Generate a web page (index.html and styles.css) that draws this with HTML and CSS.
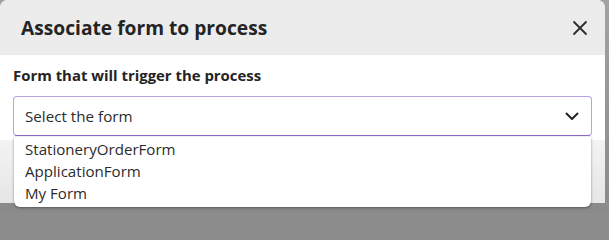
FILE: index.html
```html
<!DOCTYPE html>
<html lang="en">
<head>
<meta charset="utf-8">
<title>Associate form to process</title>
<link rel="stylesheet" href="styles.css">
</head>
<body>
<div class="page">
  <div class="dialog">
    <div class="header">
      <h1 class="title">Associate form to process</h1>
      <button class="close" aria-label="Close">
        <svg width="16" height="16" viewBox="0 0 16 16"><path d="M2 2 L14 14 M14 2 L2 14" stroke="#2b2b2b" stroke-width="1.8" fill="none" stroke-linecap="round"/></svg>
      </button>
    </div>
    <div class="body">
      <label class="label">Form that will trigger the process</label>
      <div class="select-wrap">
        <div class="select">
          <span class="placeholder">Select the form</span>
          <svg class="chevron" width="14" height="9" viewBox="0 0 14 9"><path d="M1.5 1.5 L7 7 L12.5 1.5" stroke="#242424" stroke-width="2" fill="none" stroke-linecap="round" stroke-linejoin="round"/></svg>
        </div>
        <ul class="menu">
          <li>StationeryOrderForm</li>
          <li>ApplicationForm</li>
          <li>My Form</li>
        </ul>
      </div>
    </div>
    <div class="footer"></div>
  </div>
</div>
</body>
</html>
```

FILE: styles.css
```css
html, body {
  margin: 0;
  padding: 0;
}
body {
  background: #8c8c8c;
  font-family: "Open Sans", "Noto Sans", "Liberation Sans", sans-serif;
  color: #242424;
}
.page {
  width: 609px;
  height: 213px;
  display: flex;
  background: linear-gradient(#a3a3a3, #8a8a8a);
}
.dialog {
  width: 605px;
  height: 203px;
  display: flex;
  flex-direction: column;
  background: #ffffff;
  border-radius: 8px 8px 0 0;
}
.header {
  height: 55px;
  flex: none;
  display: flex;
  align-items: center;
  justify-content: space-between;
  padding: 0 15px 0 21px;
  background: #ececec;
  border-radius: 8px 8px 0 0;
}
.title {
  margin: 0;
  font-size: 19.2px;
  font-weight: 700;
  color: #242424;
}
.close {
  border: 0;
  background: transparent;
  padding: 0;
  width: 20px;
  height: 20px;
  display: flex;
  align-items: center;
  justify-content: center;
}
.body {
  padding: 10px 13px 0 13px;
  height: 75px;
  flex: none;
  background: #ffffff;
}
.label {
  display: block;
  font-size: 14.9px;
  font-weight: 700;
  line-height: 20px;
  margin-bottom: 11px;
  color: #242424;
}
.select-wrap {
  position: relative;
}
.select {
  height: 40px;
  box-sizing: border-box;
  border: 1.5px solid #b7a2e3;
  border-bottom-color: #8a6cc9;
  border-radius: 4px;
  display: flex;
  align-items: center;
  justify-content: space-between;
  padding: 0 12px 0 11px;
  background: #ffffff;
}
.placeholder {
  font-size: 15.2px;
  color: #2b2b2b;
}
.menu {
  position: absolute;
  top: 41px;
  left: 1px;
  right: 1px;
  margin: 0;
  padding: 1px 0 3px 0;
  list-style: none;
  background: #ffffff;
  border-radius: 0 0 6px 6px;
  box-shadow: 0 1px 3px rgba(0,0,0,0.35), 0 0 1px rgba(0,0,0,0.2);
  z-index: 2;
}
.menu li {
  font-size: 15.1px;
  line-height: 22px;
  padding-left: 11px;
  color: #2b2b2b;
}
.footer {
  flex: 1;
  background: linear-gradient(#f3f3f3, #e6e6e6);
}
```
